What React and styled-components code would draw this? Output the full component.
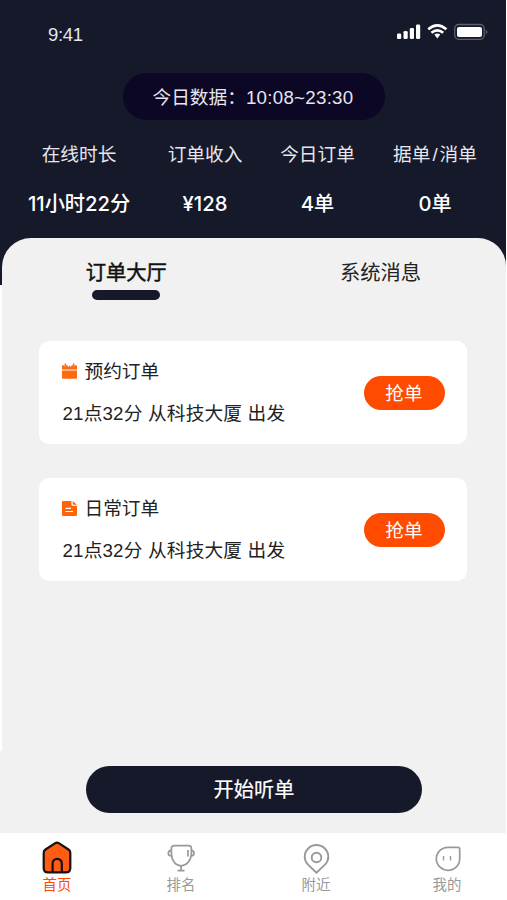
import { useState } from 'react';
import styled, { createGlobalStyle, css } from 'styled-components';

const GlobalStyles = createGlobalStyle`
  :root {
    --color-navy: #151929;
    --color-indigo: #0b0724;
    --color-orange: #ff4b00;
    --color-panel: #f1f1f1;
    --color-grey: #999;
    --font-text: 'Liberation Sans', 'Noto Sans CJK SC', sans-serif;
    --font-strong: Inter, 'Noto Sans CJK SC', sans-serif;
  }

  * {
    box-sizing: border-box;
    margin: 0;
    padding: 0;
  }

  body {
    background-color: #fff;
    font-family: var(--font-text);
    overflow: hidden;
  }

  button {
    border: none;
    background: none;
    font-family: inherit;
    cursor: pointer;
  }
`;

const Screen = styled.div`
  width: 507px;
  height: 900px;
  padding-right: 1px;
  display: flex;
  flex-direction: column;
  white-space: nowrap;
  background-color: #fff;
`;

const Header = styled.header`
  height: 285px;
  flex-shrink: 0;
  display: flex;
  flex-direction: column;
  align-items: center;
  background-color: var(--color-navy);
  color: #e6e6ee;
`;

const StatusBar = styled.div`
  width: 100%;
  height: 73px;
  padding: 22px 18px 0 48px;
  display: flex;
  justify-content: space-between;
  align-items: flex-start;
`;

const Clock = styled.span`
  font-size: 18.5px;
  line-height: 25px;
  letter-spacing: -0.3px;
`;

const StatusIcons = styled.svg`
  width: 92px;
  height: 20px;
`;

const DataPill = styled.div`
  width: 262px;
  height: 47px;
  margin-left: 1px;
  border-radius: 24px;
  padding-left: 30px;
  background-color: var(--color-indigo);
  font-size: 18.7px;
  line-height: 50px;

  span {
    letter-spacing: 0.28px;
  }
`;

const Stats = styled.dl`
  width: 100%;
  padding-top: 20px;
  display: grid;
  grid-template-columns: 158px 94px 131px 104px;
`;

const Stat = styled.div`
  display: flex;
  flex-direction: column;
  align-items: center;
  gap: 19px;
`;

const StatLabel = styled.dt`
  font-size: 18.7px;
  line-height: 30px;

  span {
    margin: 0 2px;
  }
`;

const StatValue = styled.dd`
  font-family: var(--font-strong);
  font-size: 20.2px;
  font-weight: 500;
  line-height: 30px;
  color: #fff;
`;

const Panel = styled.main`
  flex: 1;
  margin-top: -47.5px;
  border-radius: 29px 28px 0 0;
  margin-left: 2px;
  display: flex;
  flex-direction: column;
  background-color: var(--color-panel);
`;

const Tabs = styled.nav`
  height: 103px;
  padding-top: 20.5px;
  display: grid;
  grid-template-columns: 248.5px 260px;
  align-items: start;
`;

const Tab = styled.button`
  display: flex;
  flex-direction: column;
  align-items: center;
  gap: 2px;
  font-size: 20.3px;
  line-height: 30px;
  color: #222;

  ${(props) =>
    props.$active &&
    css`
      color: #111;
      -webkit-text-stroke: 0.5px #111;

      &::after {
        content: '';
        width: 68px;
        height: 10px;
        border-radius: 5px;
        background-color: var(--color-navy);
      }
    `}
`;

const Orders = styled.ul`
  padding: 0 39px 0 37px;
  display: flex;
  flex-direction: column;
  gap: 33.5px;
  list-style: none;
`;

const OrderCard = styled.li`
  height: 103.5px;
  padding: 1px 22.5px 0 22.5px;
  border-radius: 10px;
  display: flex;
  justify-content: space-between;
  align-items: center;
  background-color: #fff;
`;

const OrderTitle = styled.h3`
  display: flex;
  align-items: center;
  gap: 6.5px;
  font-size: 18.7px;
  font-weight: 400;
  line-height: 30px;
  color: #222;

  svg {
    width: 17px;
    height: 17px;
    margin-left: -0.5px;
  }
`;

const OrderText = styled.p`
  margin-top: 12px;
  padding-left: 1px;
  font-size: 18.7px;
  line-height: 30px;
  letter-spacing: 0.18px;
  color: #222;
`;

const GrabButton = styled.button`
  width: 81px;
  height: 34.5px;
  border-radius: 18px;
  background-color: var(--color-orange);
  color: #fff;
  font-size: 18.7px;
  line-height: 35px;
`;

const BottomArea = styled.footer`
  flex-shrink: 0;
  background-color: var(--color-panel);
`;

const StartButton = styled.button`
  display: block;
  width: 336px;
  height: 46.5px;
  margin: 15px 0 20px 86px;
  padding-top: 2px;
  border-radius: 24px;
  background-color: var(--color-navy);
  color: #fff;
  font-size: 20.2px;
  line-height: 44.5px;
  -webkit-text-stroke: 0.2px #fff;
`;

const TabBar = styled.nav`
  height: 67.5px;
  display: grid;
  grid-template-columns: 114px 134px 136px 126px;
  background-color: #fff;
`;

const TabBarItem = styled.button`
  padding-top: 6px;
  display: flex;
  flex-direction: column;
  align-items: center;
  font-size: 14.4px;
  line-height: 20px;
  color: ${(props) =>
    props.$active ? 'var(--color-orange)' : 'var(--color-grey)'};

  svg {
    width: 36px;
    height: 36px;
  }
`;

function CalendarIcon() {
  return (
    <svg viewBox='0 0 17 17'>
      <path
        d='M1 7.4h15v7.2q0 1.2-1.2 1.2H2.2Q1 15.800 1 14.600zM1 6.500V3.200q0-1 1-1h1.100L4.300 4l1.500-2.600L7.300 4l1.200-1.800L9.700 4l1.500-2.600L12.700 4l1.200-1.800H15q1 0 1 1v3.300z'
        fill='#ff6a10'
      />
      <path
        d='M4.300 1v2M12.700 1v2'
        stroke='#ff6a10'
        strokeWidth='1.400'
        strokeLinecap='round'
      />
    </svg>
  );
}

function DocumentIcon() {
  return (
    <svg viewBox='0 0 17 17'>
      <path
        d='M2 1h8.400v3.600q0 1.200 1.200 1.200H16V15q0 1-1 1H2q-1 0-1-1V2q0-1 1-1zM11.700 1L16 4.800h-3.500q-.8 0-.8-.8z'
        fill='#ff6508'
      />
      <path d='M4.500 8.300h5.500M4.500 11.500h7.500' stroke='#fff' strokeWidth='1.200' />
    </svg>
  );
}

function HomeIcon() {
  return (
    <svg viewBox='0 0 36 36' stroke='#17110f' strokeWidth='2.200'>
      <path
        d='M16.200 4.200Q18 3.100 19.800 4.200L29.500 10.500Q31.300 11.700 31.300 13.800V29Q31.300 33.400 27 33.400H9Q4.700 33.400 4.700 29V13.800Q4.700 11.700 6.500 10.500z'
        fill='#ff5c14'
      />
      <path d='M13.600 33V24.400a4.600 4.600 0 0 1 9.200 0V33' fill='none' />
    </svg>
  );
}

function TrophyIcon() {
  return (
    <svg viewBox='0 0 36 36' fill='none' stroke='#999' strokeWidth='1.700'>
      <path d='M11.200 6.700H25.600Q28.500 6.700 28.400 9.700V14.500C28.200 21.500 23.500 26.600 18 26.800 12.500 26.600 8.500 21.500 8.400 14.500V9.700Q8.300 6.700 11.200 6.700z' />
      <path d='M8.200 11.300Q5.300 11.500 5.300 14.200T8.300 17M28.600 11.300Q31 11.700 31 14.200T28.400 17' />
      <path d='M18 27v4.500M14.500 31.700h7M25 11v6.500' />
    </svg>
  );
}

function PinIcon() {
  return (
    <svg viewBox='0 0 36 36' fill='none' stroke='#999' strokeWidth='1.900'>
      <path d='M18.500 33.800L10 25.700C7.700 23.300 6.700 21 6.700 17.800a11.800 11.800 0 0 1 23.600 0c0 3.200-1 5.500-3.300 7.900z' />
      <circle cx='18.500' cy='18.500' r='4.800' />
    </svg>
  );
}

function FaceIcon() {
  return (
    <svg viewBox='0 0 36 36' fill='none' stroke='#999' strokeWidth='1.700'>
      <path d='M19 8.300H29Q30.700 8.300 30.700 10V19.700A11.700 11.500 0 1 1 19 8.300z' />
      <path d='M14.500 17v4.500M21.500 17v4.500' strokeWidth='1.400' />
    </svg>
  );
}

const stats = [
  { label: '在线时长', value: '11小时22分' },
  { label: '订单收入', value: '¥128' },
  { label: '今日订单', value: '4单' },
  {
    label: (
      <>
        据单<span>/</span>消单
      </>
    ),
    value: '0单',
  },
];

const tabs = ['订单大厅', '系统消息'];

const orders = [
  {
    id: 1,
    title: '预约订单',
    text: '21点32分 从科技大厦 出发',
    icon: <CalendarIcon />,
  },
  {
    id: 2,
    title: '日常订单',
    text: '21点32分 从科技大厦 出发',
    icon: <DocumentIcon />,
  },
];

const pages = [
  { name: '首页', icon: <HomeIcon /> },
  { name: '排名', icon: <TrophyIcon /> },
  { name: '附近', icon: <PinIcon /> },
  { name: '我的', icon: <FaceIcon /> },
];

function PhoneStatus() {
  return (
    <StatusBar>
      <Clock>9:41</Clock>
      <StatusIcons viewBox='0 0 92 20'>
        <g fill='#fff'>
          <rect x='1' y='11.500' width='4.200' height='5.500' rx='1.300' />
          <rect x='7.500' y='9' width='4.200' height='8' rx='1.300' />
          <rect x='13.800' y='6' width='4.200' height='11' rx='1.300' />
          <rect x='20' y='2.500' width='4.200' height='14.500' rx='1.300' />
          <path d='M38.300 12.600q3-2.300 6 0l-3 3.800z' />
          <rect x='61' y='5' width='25' height='10' rx='2' />
        </g>
        <g fill='none' stroke='#fff' strokeWidth='2.600'>
          <path d='M32.200 7.300Q41.300-.6 50.400 7.300' />
          <path d='M35.400 10.800Q41.300 6 47.200 10.800' />
        </g>
        <rect
          x='58.700'
          y='2.500'
          width='29.500'
          height='14.800'
          rx='4'
          fill='none'
          stroke='#5d606c'
          strokeWidth='1.300'
        />
        <path d='M89.800 7.500q3.200 2.500 0 5z' fill='#5d606c' />
      </StatusIcons>
    </StatusBar>
  );
}

function App() {
  const [activeTab, setActiveTab] = useState(tabs[0]);
  const [activePage, setActivePage] = useState(pages[0].name);

  return (
    <>
      <GlobalStyles />
      <Screen>
        <Header>
          <PhoneStatus />
          <DataPill>
            今日数据：<span>10:08~23:30</span>
          </DataPill>
          <Stats>
            {stats.map(({ label, value }) => (
              <Stat key={value}>
                <StatLabel>{label}</StatLabel>
                <StatValue>{value}</StatValue>
              </Stat>
            ))}
          </Stats>
        </Header>

        <Panel>
          <Tabs>
            {tabs.map((tab) => (
              <Tab
                key={tab}
                $active={tab === activeTab}
                onClick={() => setActiveTab(tab)}
              >
                {tab}
              </Tab>
            ))}
          </Tabs>
          <Orders>
            {orders.map(({ id, title, text, icon }) => (
              <OrderCard key={id}>
                <div>
                  <OrderTitle>
                    {icon}
                    {title}
                  </OrderTitle>
                  <OrderText>{text}</OrderText>
                </div>
                <GrabButton>抢单</GrabButton>
              </OrderCard>
            ))}
          </Orders>
        </Panel>

        <BottomArea>
          <StartButton>开始听单</StartButton>
          <TabBar>
            {pages.map(({ name, icon }) => (
              <TabBarItem
                key={name}
                $active={name === activePage}
                onClick={() => setActivePage(name)}
              >
                {icon}
                {name}
              </TabBarItem>
            ))}
          </TabBar>
        </BottomArea>
      </Screen>
    </>
  );
}

export default App;
